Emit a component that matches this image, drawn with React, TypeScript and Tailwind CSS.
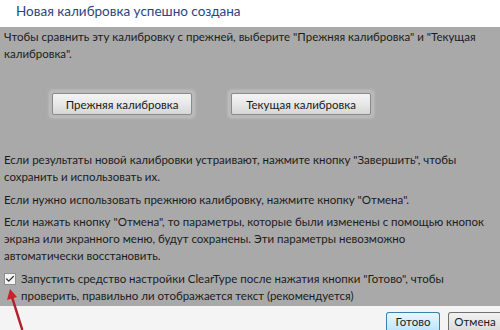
import { Check } from "lucide-react";

const font = { fontFamily: 'Lato, "Noto Sans", sans-serif' };

function GlowButton({ label }: { label: string }) {
  return (
    <div className="rounded-[3px] bg-[#b9b9b9] p-[2px] shadow-[0_0_3px_1px_#c4c4c4]">
      <button className="h-[22px] w-[140px] rounded-[2px] border border-[#8a8a8a] bg-gradient-to-b from-[#f4f4f4] via-[#e8e8e8] to-[#d6d6d6] text-[11.5px] text-[#1a1a1a]">
        {label}
      </button>
    </div>
  );
}

export default function App() {
  return (
    <div className="flex h-[330px] w-[500px] flex-col overflow-hidden bg-white text-[#1c1c1c]" style={font}>
      {/* Title */}
      <div className="h-[27px] whitespace-nowrap pl-[16px] pt-[1px] text-[13.5px] leading-[20px] text-[#2a4582]">
        Новая калибровка успешно создана
      </div>

      {/* Gray content */}
      <div className="flex h-[279px] flex-col whitespace-nowrap bg-[#a9a9a9] px-[4px] pt-[1px] text-[11.5px] leading-[17px]">
        <p>
          Чтобы сравнить эту калибровку с прежней, выберите "Прежняя калибровка" и "Текущая
          <br />
          калибровка".
        </p>

        <div className="mt-[29px] flex gap-[35px] pl-[46px]">
          <GlowButton label="Прежняя калибровка" />
          <GlowButton label="Текущая калибровка" />
        </div>

        <p className="mt-[34px]">
          Если результаты новой калибровки устраивают, нажмите кнопку "Завершить", чтобы
          <br />
          сохранить и использовать их.
        </p>
        <p className="mt-[6px]">Если нужно использовать прежнюю калибровку, нажмите кнопку "Отмена".</p>
        <p className="mt-[5px]">
          Если нажать кнопку "Отмена", то параметры, которые были изменены с помощью кнопок
          <br />
          экрана или экранного меню, будут сохранены. Эти параметры невозможно
          <br />
          автоматически восстановить.
        </p>

        <div className="mt-[6px] flex items-start gap-[5px]">
          <span className="mt-[3px] flex h-[12px] w-[12px] shrink-0 items-center justify-center border border-[#8e8e8e] bg-[#f4f4f4]">
            <Check className="h-[10px] w-[10px] text-[#333]" strokeWidth={3} />
          </span>
          <p>
            Запустить средство настройки ClearType после нажатия кнопки "Готово", чтобы
            <br />
            проверить, правильно ли отображается текст (рекомендуется)
          </p>
        </div>
      </div>

      {/* Footer */}
      <div className="relative flex flex-1 items-end gap-[8px] bg-[#f4f4f4] pl-[386px]">
        <svg className="absolute left-[4px] top-[-18px]" width="24" height="42" viewBox="0 0 24 42">
          <path d="M18 41 L8 9" stroke="#b4202a" strokeWidth="2.5" strokeLinecap="round" />
          <path d="M3 12 L6 1 L13 9 Z" fill="#c8222c" />
        </svg>
        <button className="h-[18px] w-[54px] shrink-0 rounded-t-[3px] border border-b-0 border-[#3c7fb1] bg-gradient-to-b from-[#eaf6fd] to-[#bee6fd] text-[11.5px] leading-[16px] text-[#1c1c1c]">
          Готово
        </button>
        <button className="h-[18px] w-[60px] shrink-0 rounded-t-[3px] border border-b-0 border-[#707070] bg-gradient-to-b from-[#f2f2f2] to-[#dcdcdc] pr-[6px] text-[11.5px] leading-[16px] text-[#1c1c1c]">
          Отмена
        </button>
      </div>
    </div>
  );
}
